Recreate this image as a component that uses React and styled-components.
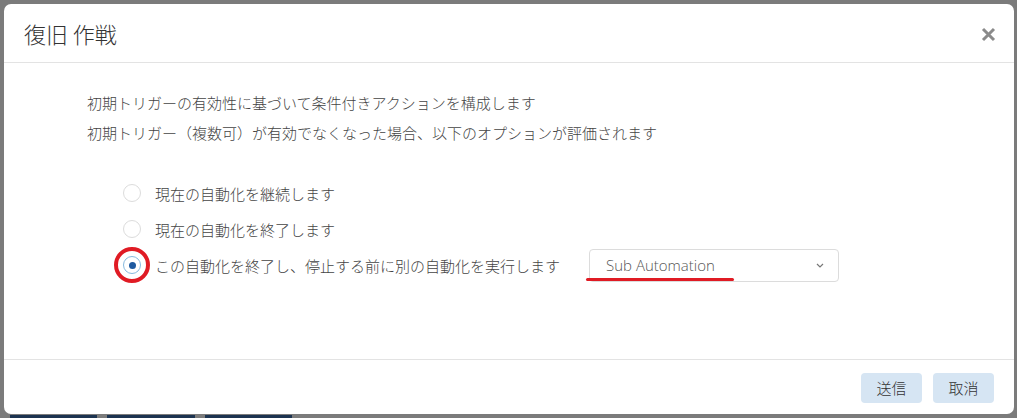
import React from "react";
import styled, { createGlobalStyle } from "styled-components";

const Global = createGlobalStyle`
  html, body { margin: 0; padding: 0; }
  body {
    background: #7b7b7b;
    overflow: hidden;
    font-family: "Open Sans", "Noto Sans CJK JP", sans-serif;
  }
`;

const Page = styled.div`
  width: 1017px;
  height: 418px;
  box-sizing: border-box;
  padding: 4px 3px 0 4px;
  display: flex;
  flex-direction: column;
`;

const Modal = styled.div`
  width: 1010px;
  height: 410px;
  background: #fff;
  border-radius: 7px;
  display: flex;
  flex-direction: column;
  flex-shrink: 0;
`;

const Header = styled.div`
  height: 59px;
  box-sizing: border-box;
  border-bottom: 1px solid #e3e3e3;
  display: flex;
  align-items: center;
  justify-content: space-between;
  padding: 0 16px 0 20px;
`;

const Title = styled.h4`
  margin: 0;
  font-family: "Noto Sans CJK JP", sans-serif;
  font-weight: 300;
  font-size: 22px;
  color: #333;
`;

const Close = styled.button`
  border: 0;
  background: none;
  padding: 0;
  width: 20px;
  height: 20px;
  display: flex;
  align-items: center;
  justify-content: center;
  cursor: pointer;
  margin-top: 2px;
`;

const Body = styled.div`
  flex: 1;
  padding: 25px 0 0 83px;
  font-family: "Noto Sans CJK JP", sans-serif;
  font-size: 15px;
  font-weight: 300;
  color: #444;
`;

const Line = styled.p`
  margin: 0;
  line-height: 30px;
`;

const Options = styled.div`
  margin-top: 27px;
  padding-left: 36px;
  display: flex;
  flex-direction: column;
`;

const Option = styled.label`
  height: 36px;
  display: flex;
  align-items: center;
  gap: 14px;
  cursor: pointer;
`;

const RadioWrap = styled.span`
  position: relative;
  width: 18px;
  height: 18px;
  flex-shrink: 0;
`;

const Radio = styled.span`
  display: block;
  width: 18px;
  height: 18px;
  box-sizing: border-box;
  border-radius: 50%;
  border: 1px solid ${(p) => (p.$checked ? "#86b9de" : "#dcdcdc")};
  background: #fff;
  position: relative;
  &::after {
    content: "";
    display: ${(p) => (p.$checked ? "block" : "none")};
    position: absolute;
    left: 50%;
    top: 50%;
    width: 7px;
    height: 7px;
    margin: -3.5px 0 0 -3.5px;
    border-radius: 50%;
    background: #1e5aa0;
  }
`;

const RedRing = styled.span`
  position: absolute;
  left: -9px;
  top: -9px;
  width: 36px;
  height: 36px;
  box-sizing: border-box;
  border: 4px solid #e01b24;
  border-radius: 50%;
  pointer-events: none;
`;

const LabelText = styled.span`
  white-space: nowrap;
`;

const SelectBox = styled.div`
  position: relative;
  margin-left: 15px;
  width: 250px;
  height: 33px;
  box-sizing: border-box;
  border: 1px solid #dcdcdc;
  border-radius: 4px;
  display: flex;
  align-items: center;
  justify-content: space-between;
  padding: 0 14px 0 16px;
  font-family: "Open Sans", sans-serif;
  font-size: 15px;
  color: #555;
`;

const RedUnderline = styled.span`
  position: absolute;
  left: -4px;
  top: 28px;
  width: 148px;
  height: 3px;
  border-radius: 2px;
  background: #e01b24;
`;

const Footer = styled.div`
  height: 55px;
  box-sizing: border-box;
  border-top: 1px solid #e3e3e3;
  display: flex;
  align-items: center;
  justify-content: flex-end;
  gap: 11px;
  padding: 1px 20px 0 0;
`;

const Button = styled.button`
  width: 61px;
  height: 30px;
  border: 0;
  border-radius: 4px;
  background: #d6e5f3;
  color: #333;
  font-family: "Noto Sans CJK JP", sans-serif;
  font-weight: 300;
  font-size: 15px;
  padding: 0;
  cursor: pointer;
`;

const Strip = styled.div`
  margin-top: 1px;
  height: 3px;
  display: flex;
  gap: 10px;
  padding-left: 6px;
`;

const Tab = styled.div`
  width: ${(p) => p.$w}px;
  background: #1c3350;
`;

const options = [
  "現在の自動化を継続します",
  "現在の自動化を終了します",
  "この自動化を終了し、停止する前に別の自動化を実行します",
];

export default function App() {
  return (
    <>
      <Global />
      <Page>
        <Modal>
          <Header>
            <Title>復旧 作戦</Title>
            <Close aria-label="close">
              <svg width="15" height="15" viewBox="0 0 15 15">
                <path d="M2 2 L13 13 M13 2 L2 13" stroke="#8a8a8a" strokeWidth="3" strokeLinecap="butt" />
              </svg>
            </Close>
          </Header>
          <Body>
            <Line>初期トリガーの有効性に基づいて条件付きアクションを構成します</Line>
            <Line>初期トリガー（複数可）が有効でなくなった場合、以下のオプションが評価されます</Line>
            <Options>
              {options.map((o, i) => {
                const checked = i === 2;
                return (
                  <Option key={o}>
                    <RadioWrap>
                      <Radio $checked={checked} />
                      {checked && <RedRing />}
                    </RadioWrap>
                    <LabelText>{o}</LabelText>
                    {checked && (
                      <SelectBox>
                        <span>Sub Automation</span>
                        <svg width="8" height="5" viewBox="0 0 8 5">
                          <path d="M1 1 L4 4 L7 1" fill="none" stroke="#777" strokeWidth="1.2" />
                        </svg>
                        <RedUnderline />
                      </SelectBox>
                    )}
                  </Option>
                );
              })}
            </Options>
          </Body>
          <Footer>
            <Button>送信</Button>
            <Button>取消</Button>
          </Footer>
        </Modal>
        <Strip>
          <Tab $w={87} />
          <Tab $w={88} />
          <Tab $w={87} />
        </Strip>
      </Page>
    </>
  );
}
